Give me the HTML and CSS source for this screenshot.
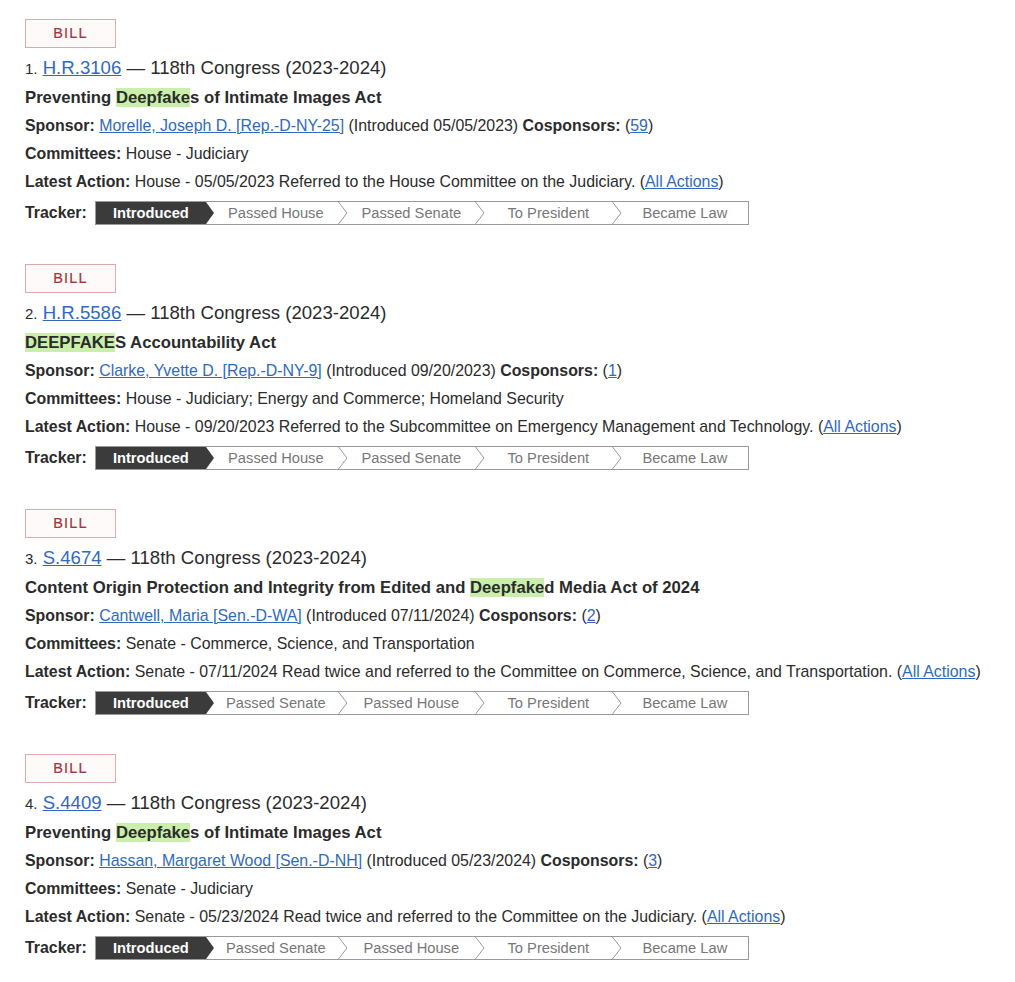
FILE: index.html
```html
<!DOCTYPE html>
<html lang="en">

<head>
    <meta charset="UTF-8">
    <title>Search results</title>
    <link rel="stylesheet" href="styles.css">
</head>

<body>
    <ol class="results">
        <li class="result">
            <span class="badge">BILL</span>
            <div class="heading"><span class="num">1.</span> <a href="#">H.R.3106</a> — 118th Congress (2023-2024)</div>
            <div class="title">Preventing <mark>Deepfake</mark>s of Intimate Images Act</div>
            <div class="line"><b>Sponsor:</b> <a href="#">Morelle, Joseph D. [Rep.-D-NY-25]</a> (Introduced 05/05/2023) <b>Cosponsors:</b> (<a href="#">59</a>)</div>
            <div class="line"><b>Committees:</b> House - Judiciary</div>
            <div class="line"><b>Latest Action:</b> House - 05/05/2023 Referred to the House Committee on the Judiciary. (<a href="#">All Actions</a>)</div>
            <div class="tracker">
                <b>Tracker:</b>
                <ol class="steps">
                    <li class="done">Introduced</li>
                    <li>Passed House<svg class="chev" viewBox="0 0 10 22"><polyline points="0.5,0 9,11 0.5,22" /></svg></li>
                    <li>Passed Senate<svg class="chev" viewBox="0 0 10 22"><polyline points="0.5,0 9,11 0.5,22" /></svg></li>
                    <li>To President<svg class="chev" viewBox="0 0 10 22"><polyline points="0.5,0 9,11 0.5,22" /></svg></li>
                    <li>Became Law</li>
                </ol>
            </div>
        </li>
        <li class="result">
            <span class="badge">BILL</span>
            <div class="heading"><span class="num">2.</span> <a href="#">H.R.5586</a> — 118th Congress (2023-2024)</div>
            <div class="title"><mark>DEEPFAKE</mark>S Accountability Act</div>
            <div class="line"><b>Sponsor:</b> <a href="#">Clarke, Yvette D. [Rep.-D-NY-9]</a> (Introduced 09/20/2023) <b>Cosponsors:</b> (<a href="#">1</a>)</div>
            <div class="line"><b>Committees:</b> House - Judiciary; Energy and Commerce; Homeland Security</div>
            <div class="line"><b>Latest Action:</b> House - 09/20/2023 Referred to the Subcommittee on Emergency Management and Technology. (<a href="#">All Actions</a>)</div>
            <div class="tracker">
                <b>Tracker:</b>
                <ol class="steps">
                    <li class="done">Introduced</li>
                    <li>Passed House<svg class="chev" viewBox="0 0 10 22"><polyline points="0.5,0 9,11 0.5,22" /></svg></li>
                    <li>Passed Senate<svg class="chev" viewBox="0 0 10 22"><polyline points="0.5,0 9,11 0.5,22" /></svg></li>
                    <li>To President<svg class="chev" viewBox="0 0 10 22"><polyline points="0.5,0 9,11 0.5,22" /></svg></li>
                    <li>Became Law</li>
                </ol>
            </div>
        </li>
        <li class="result">
            <span class="badge">BILL</span>
            <div class="heading"><span class="num">3.</span> <a href="#">S.4674</a> — 118th Congress (2023-2024)</div>
            <div class="title">Content Origin Protection and Integrity from Edited and <mark>Deepfake</mark>d Media Act of 2024</div>
            <div class="line"><b>Sponsor:</b> <a href="#">Cantwell, Maria [Sen.-D-WA]</a> (Introduced 07/11/2024) <b>Cosponsors:</b> (<a href="#">2</a>)</div>
            <div class="line"><b>Committees:</b> Senate - Commerce, Science, and Transportation</div>
            <div class="line"><b>Latest Action:</b> Senate - 07/11/2024 Read twice and referred to the Committee on Commerce, Science, and Transportation. (<a href="#">All Actions</a>)</div>
            <div class="tracker">
                <b>Tracker:</b>
                <ol class="steps">
                    <li class="done">Introduced</li>
                    <li>Passed Senate<svg class="chev" viewBox="0 0 10 22"><polyline points="0.5,0 9,11 0.5,22" /></svg></li>
                    <li>Passed House<svg class="chev" viewBox="0 0 10 22"><polyline points="0.5,0 9,11 0.5,22" /></svg></li>
                    <li>To President<svg class="chev" viewBox="0 0 10 22"><polyline points="0.5,0 9,11 0.5,22" /></svg></li>
                    <li>Became Law</li>
                </ol>
            </div>
        </li>
        <li class="result">
            <span class="badge">BILL</span>
            <div class="heading"><span class="num">4.</span> <a href="#">S.4409</a> — 118th Congress (2023-2024)</div>
            <div class="title">Preventing <mark>Deepfake</mark>s of Intimate Images Act</div>
            <div class="line"><b>Sponsor:</b> <a href="#">Hassan, Margaret Wood [Sen.-D-NH]</a> (Introduced 05/23/2024) <b>Cosponsors:</b> (<a href="#">3</a>)</div>
            <div class="line"><b>Committees:</b> Senate - Judiciary</div>
            <div class="line"><b>Latest Action:</b> Senate - 05/23/2024 Read twice and referred to the Committee on the Judiciary. (<a href="#">All Actions</a>)</div>
            <div class="tracker">
                <b>Tracker:</b>
                <ol class="steps">
                    <li class="done">Introduced</li>
                    <li>Passed Senate<svg class="chev" viewBox="0 0 10 22"><polyline points="0.5,0 9,11 0.5,22" /></svg></li>
                    <li>Passed House<svg class="chev" viewBox="0 0 10 22"><polyline points="0.5,0 9,11 0.5,22" /></svg></li>
                    <li>To President<svg class="chev" viewBox="0 0 10 22"><polyline points="0.5,0 9,11 0.5,22" /></svg></li>
                    <li>Became Law</li>
                </ol>
            </div>
        </li>
    </ol>
</body>

</html>
```

FILE: styles.css
```css
body {
    margin: 0px;
    background-color: #fff;
    color: #2b2b2b;
    font: 15.9px/28px "Liberation Sans", Arial, sans-serif;
}

a {
    color: #2f6ac0;
    text-decoration: underline;
}

.results {
    margin: 0px;
    padding: 19px 0px 0px 25px;
    list-style: none;
}

.result {
    margin-bottom: 39px;
}

.badge {
    display: block;
    box-sizing: border-box;
    width: 91px;
    height: 29px;
    border: 1px solid #dfaaad;
    background-color: #fffafa;
    color: #a3363b;
    font-size: 14.5px;
    line-height: 27px;
    letter-spacing: 1.2px;
    text-align: center;
    -webkit-text-stroke: 0.2px #a3363b;
}

.heading {
    margin-top: 6px;
    font-size: 18.6px;
    line-height: 28px;
}

.heading .num {
    font-size: 15px;
}

.title {
    font-size: 16.7px;
    font-weight: bold;
    line-height: 29px;
}

mark {
    background-color: #c9efaa;
    color: inherit;
}

.line b {
    font-weight: bold;
}

/* tracker: dark first step with an arrow, then thin chevrons */
.tracker {
    display: flex;
    align-items: center;
    gap: 8px;
    margin-top: 5px;
    line-height: 24px;
}

.steps {
    display: flex;
    box-sizing: border-box;
    height: 24px;
    margin: 0px;
    padding: 0px;
    border: 1px solid #9a9a9a;
    list-style: none;
    font-size: 14.7px;
    line-height: 22px;
    color: #777;
}

.steps li {
    position: relative;
    box-sizing: border-box;
    text-align: center;
    white-space: nowrap;
}

.steps li:nth-child(1) {
    width: 110px;
}

.steps li:nth-child(2) {
    width: 142px;
    padding: 0px 10px 0px 8px;
}

.steps li:nth-child(3),
.steps li:nth-child(4) {
    width: 137px;
    padding-right: 10px;
}

.steps li:nth-child(5) {
    width: 126px;
}

.steps .done {
    background-color: #3b3b3b;
    color: #fff;
    font-weight: bold;
}

.steps .done::after {
    content: "";
    position: absolute;
    top: 0px;
    left: 100%;
    border-left: 8px solid #3b3b3b;
    border-top: 11px solid transparent;
    border-bottom: 11px solid transparent;
}

.chev {
    position: absolute;
    top: 0px;
    right: 0px;
    width: 10px;
    height: 22px;
}

.chev polyline {
    fill: none;
    stroke: #9a9a9a;
    stroke-width: 1;
}
```
